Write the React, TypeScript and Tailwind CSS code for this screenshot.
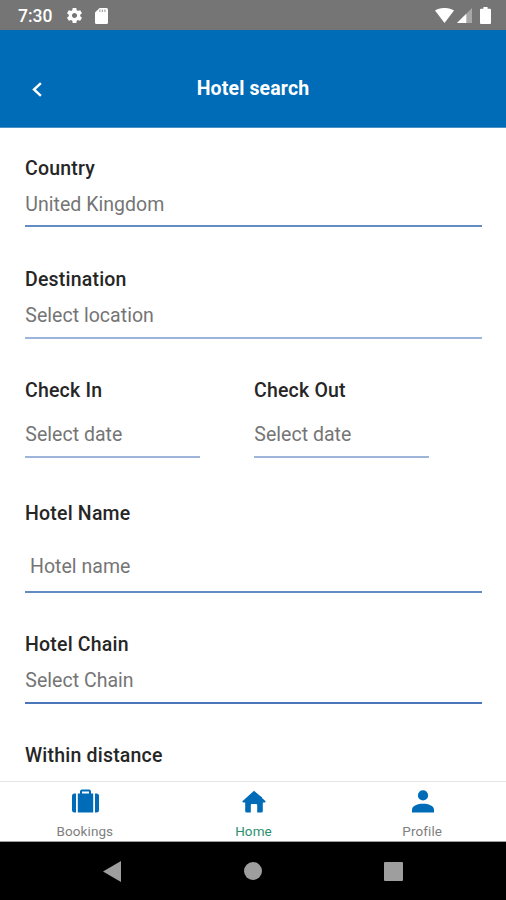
import React from "react";

function Label({ children }: { children: React.ReactNode }) {
  return <div className="h-6 pt-px text-[19.5px] leading-6 font-medium tracking-[0.2px] text-[#262626] whitespace-nowrap">{children}</div>;
}

function Value({ children, className }: { children: React.ReactNode; className: string }) {
  return <div className={`h-6 text-[19.5px] leading-6 tracking-[0.03px] text-[#757575] whitespace-nowrap ${className}`}>{children}</div>;
}

function StatusBar() {
  return (
    <div className="flex h-[30px] items-center bg-[#757575] pl-[18px] pr-[15px] text-white">
      <span className="w-[35px] text-[17.5px] leading-[30px] font-medium whitespace-nowrap mt-px">7:30</span>
      <svg className="ml-[12px] mt-px h-[19px] w-[19px]" viewBox="0 0 24 24" fill="currentColor">
        <path d="M19.14 12.94c.04-.3.06-.61.06-.94 0-.32-.02-.64-.07-.94l2.03-1.58a.49.49 0 0 0 .12-.61l-1.92-3.32a.488.488 0 0 0-.59-.22l-2.39.96c-.5-.38-1.03-.7-1.62-.94l-.36-2.54a.484.484 0 0 0-.48-.41h-3.84c-.24 0-.43.17-.47.41l-.36 2.54c-.59.24-1.13.57-1.62.94l-2.39-.96c-.22-.08-.47 0-.59.22L2.74 8.87c-.12.21-.08.47.12.61l2.03 1.58c-.05.3-.09.63-.09.94s.02.64.07.94l-2.03 1.58a.49.49 0 0 0-.12.61l1.92 3.32c.12.22.37.29.59.22l2.39-.96c.5.38 1.03.7 1.62.94l.36 2.54c.05.24.24.41.48.41h3.84c.24 0 .44-.17.47-.41l.36-2.54c.59-.24 1.13-.56 1.62-.94l2.39.96c.22.08.47 0 .59-.22l1.92-3.32c.12-.22.07-.47-.12-.61l-2.01-1.58zM12 15.2c-1.77 0-3.2-1.43-3.2-3.2s1.43-3.2 3.2-3.2 3.2 1.43 3.2 3.2-1.43 3.2-3.2 3.2z" />
      </svg>
      <svg className="ml-[11px] mt-px h-4 w-[13px]" viewBox="0 0 13 16">
        <path d="M4.6 0H11.5Q13 0 13 1.5V14.5Q13 16 11.5 16H1.5Q0 16 0 14.5V4.6Z" fill="#fff" />
        <path d="M4.9 1.6V4M7.4 1.6V4M9.9 1.6V4" stroke="#aaa" strokeWidth="1.3" />
      </svg>
      <svg className="ml-auto h-[15px] w-[19px]" viewBox="0 0 19 15">
        <path d="M0 2.6C5.2-.9 13.8-.9 19 2.6L9.5 15Z" fill="#fff" />
      </svg>
      <svg className="ml-[3px] mt-px h-[15px] w-[15px]" viewBox="0 0 15 15">
        <path d="M15 0V15H0Z" fill="#a7a7a7" />
        <path d="M9.3 5.7V15H0Z" fill="#fff" />
      </svg>
      <svg className="ml-2 h-[17px] w-[11px]" viewBox="0 0 11 17">
        <path d="M3.4 0H7.6V1.8H10Q11 1.8 11 2.8V16Q11 17 10 17H1Q0 17 0 16V2.8Q0 1.8 1 1.8H3.4Z" fill="#fff" />
      </svg>
    </div>
  );
}

function Header() {
  return (
    <header className="grid h-[98px] grid-cols-[1fr_auto_1fr] items-center border-b border-[#4b92c8] bg-[#006cb7] pt-[18px]">
      <svg className="ml-8 mt-[3px] h-[15px] w-[10px]" viewBox="0 0 10 15" fill="none" stroke="#fff" strokeWidth="2.4">
        <path d="M8.9 1.1L2 7.5L8.9 13.9" />
      </svg>
      <h1 className="mt-[2px] text-[19.5px] leading-6 font-bold tracking-[0.15px] text-white whitespace-nowrap">Hotel search</h1>
      <span />
    </header>
  );
}

function Tab({ label, active, children }: { label: string; active?: boolean; children: React.ReactNode }) {
  return (
    <div className="flex flex-col items-center pt-[6px] pl-px">
      <div className="flex h-[26px] items-center pl-[1.5px]">{children}</div>
      <div className={`mt-[9px] text-[13.5px] leading-4 tracking-[0.1px] ${active ? "text-[#2d9070]" : "text-[#808080]"}`}>{label}</div>
    </div>
  );
}

export default function App() {
  return (
    <div className="flex h-[900px] w-[506px] flex-col overflow-hidden bg-white font-['Roboto',sans-serif]">
      <StatusBar />
      <Header />
      <main className="h-[653px] overflow-hidden pl-[25px] pr-6 pt-7">
        <div className="h-[71px] border-b-2 border-[#658bc4]">
          <Label>Country</Label>
          <Value className="mt-[13px] pl-[0.3px]">United Kingdom</Value>
        </div>
        <div className="mt-10 h-[72px] border-b-2 border-[#9db4db]">
          <Label>Destination</Label>
          <Value className="mt-[13px] pl-[0.3px]">Select location</Value>
        </div>
        <div className="mt-[39px] flex gap-[54px]">
          <div className="h-20 w-[175px] border-b-2 border-[#9db4db]">
            <Label>Check In</Label>
            <Value className="mt-[21px] pl-[0.3px]">Select date</Value>
          </div>
          <div className="h-20 w-[175px] border-b-2 border-[#9db4db]">
            <Label>Check Out</Label>
            <Value className="mt-[21px] pl-[0.3px]">Select date</Value>
          </div>
        </div>
        <div className="mt-[43px] h-[92px] border-b-2 border-[#658bc4]">
          <Label>Hotel Name</Label>
          <Value className="mt-[30px] pl-[5px]">Hotel name</Value>
        </div>
        <div className="mt-[39px] h-[72px] border-b-2 border-[#4a77ba]">
          <Label>Hotel Chain</Label>
          <Value className="mt-[13px] pl-[0.3px]">Select Chain</Value>
        </div>
        <div className="mt-[39px]">
          <Label>Within distance</Label>
        </div>
      </main>
      <nav className="grid h-[61px] grid-cols-3 border-t border-b border-t-[#e4e4e4] border-b-[#a0a0a0]">
        <Tab label="Bookings">
          <svg className="h-6 w-[27px]" viewBox="0 0 27 24" fill="#006cb7">
            <path d="M2.5 4.5H4V23.5H2.5Q0 23.5 0 21V7Q0 4.5 2.5 4.5Z" />
            <path d="M23 4.5H24.5Q27 4.5 27 7V21Q27 23.5 24.5 23.5H23Z" />
            <path fillRule="evenodd" d="M5.8 4.5H8V2.5Q8 .5 10 .5H17Q19 .5 19 2.5V4.5H21.2V23.5H5.8ZM10 4.5H17V2.5H10Z" />
          </svg>
        </Tab>
        <Tab label="Home" active>
          <svg className="h-[23px] w-6" viewBox="0 0 24 23" fill="#006cb7">
            <path d="M12 .8L18.2 6L20 7.2V8L23.6 11.2Q23.8 12.2 22.8 12.4H20.8V21Q20.8 22.5 19.3 22.5H15.2V15Q15.2 14 14.2 14H9.8Q8.8 14 8.8 15V22.5H4.7Q3.2 22.5 3.2 21V12.4H1.2Q.2 12.2 .4 11.2Z" />
          </svg>
        </Tab>
        <Tab label="Profile">
          <svg className="h-[23px] w-[22px]" viewBox="0 0 22 23" fill="#006cb7">
            <circle cx="11" cy="5.4" r="5.1" />
            <path d="M0 22.5V19.5C0 15.8 6 13.8 11 13.8S22 15.8 22 19.5V22.5Z" />
          </svg>
        </Tab>
      </nav>
      <div className="flex h-[58px] items-center bg-black pl-[103px]">
        <svg className="h-[21px] w-[18px]" viewBox="0 0 18 21">
          <path d="M18 0V21L0 10.5Z" fill="#9e9e9e" />
        </svg>
        <div className="ml-[123px] h-[18px] w-[18px] rounded-full bg-[#9e9e9e]" />
        <div className="ml-[122px] h-[19px] w-[19px] rounded-[1px] bg-[#9e9e9e]" />
      </div>
    </div>
  );
}
